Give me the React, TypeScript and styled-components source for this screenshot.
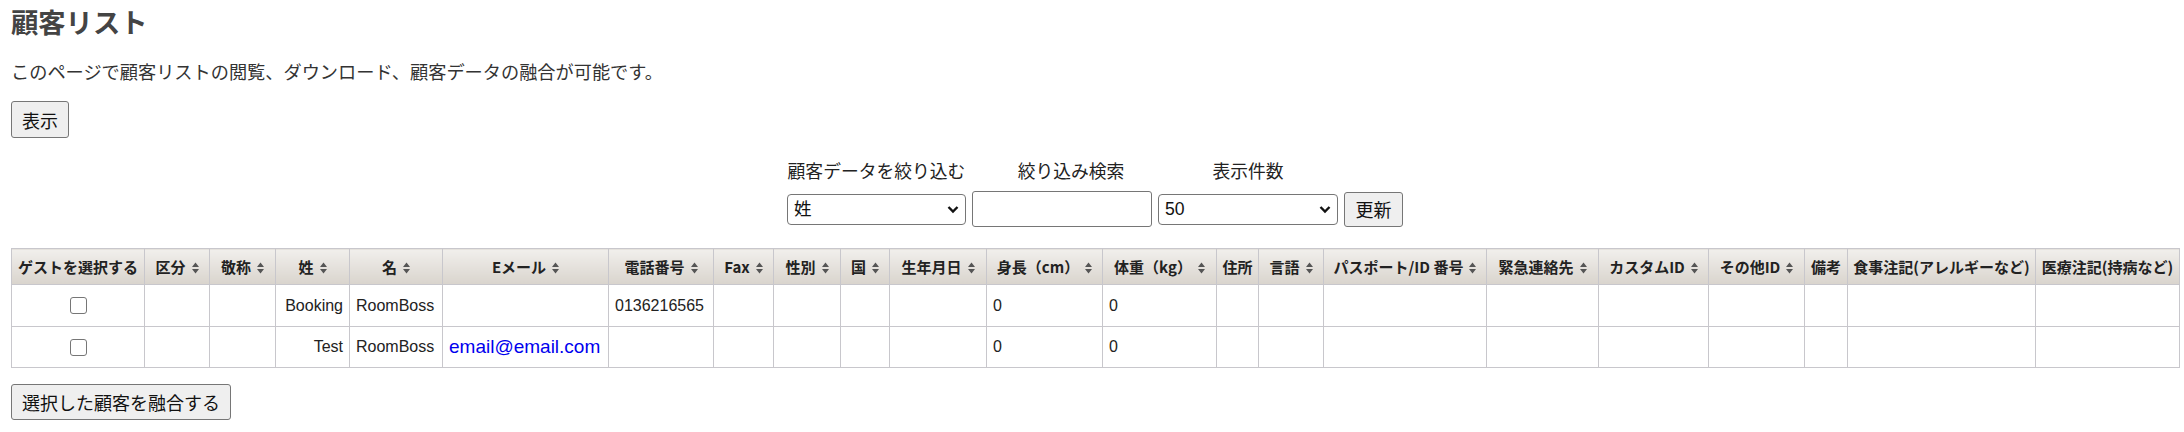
import styled, { createGlobalStyle } from "styled-components"

interface ColumnT {
  label: string,
  width: number,
  sort: boolean,
}

interface GuestT {
  id: number,
  lastName: string,
  firstName: string,
  email: string,
  phone: string,
  height: string,
  weight: string,
}

const GlobalStyle = createGlobalStyle`
  body {
    margin: 0;
    padding: 0 5px 0 11px;
    background: #fff;
    color: #222;
    font-family: "Liberation Sans", "Noto Sans CJK JP", sans-serif;
  }
`

const Title = styled.h2`
  margin: 6px 0 0;
  font-family: "Noto Sans CJK JP", sans-serif;
  font-size: 27.3px;
  line-height: 30px;
  font-weight: 700;
  color: #444;
`

const Lead = styled.p`
  margin: 23px 0 0;
  font-family: "Noto Sans CJK JP", sans-serif;
  font-size: 18.2px;
  line-height: 24px;
  color: #333;
`

const Button = styled.button<{ $height: number, $top: number }>`
  display: block;
  box-sizing: border-box;
  height: ${(p) => p.$height}px;
  margin-top: ${(p) => p.$top}px;
  padding: 0 10px;
  font-family: "Noto Sans CJK JP", sans-serif;
  font-size: 18px;
  line-height: 20px;
  color: #111;
  background: #efefef;
  border: 1px solid #767676;
  border-radius: 3px;
`

const FilterGrid = styled.div`
  display: grid;
  grid-template-columns: 179px 180px 180px 59px;
  column-gap: 6px;
  row-gap: 9px;
  justify-content: center;
  align-items: center;
  margin-top: 20px;
`

const FilterLabel = styled.div<{ $shift?: number }>`
  padding-left: ${(p) => p.$shift || 0}px;
  text-align: center;
  font-family: "Noto Sans CJK JP", sans-serif;
  font-size: 17.8px;
  line-height: 24px;
  color: #222;
  white-space: nowrap;
`

const SelectWrap = styled.div`
  position: relative;
  height: 31px;
`

const Select = styled.select`
  appearance: none;
  box-sizing: border-box;
  width: 100%;
  height: 31px;
  padding: 0 24px 0 6px;
  font-family: "Liberation Sans", "Noto Sans CJK JP", sans-serif;
  font-size: 17.6px;
  color: #111;
  background: #fff;
  border: 1px solid #767676;
  border-radius: 4px;
`

const Chevron = styled.svg`
  position: absolute;
  right: 7px;
  top: 11px;
  pointer-events: none;
`

const TextInput = styled.input`
  box-sizing: border-box;
  width: 100%;
  height: 36px;
  border: 1px solid #767676;
  border-radius: 3px;
  font-size: 17px;
`

const Table = styled.table`
  margin-top: 21px;
  width: 2168px;
  table-layout: fixed;
  border-collapse: collapse;
`

const HeadCell = styled.th`
  height: 36px;
  padding: 0 4px;
  box-sizing: border-box;
  font-family: "Noto Sans CJK JP", sans-serif;
  font-size: 15px;
  font-weight: 700;
  color: #222;
  text-align: center;
  white-space: nowrap;
  overflow: hidden;
  background: linear-gradient(#f1efec, #d9d4cd);
  border: 1px solid #c8c7cc;
`

const SortIcon = styled.svg`
  margin-left: 6px;
  vertical-align: -1px;
`

const Row = styled.tr<{ $height: number }>`
  height: ${(p) => p.$height}px;
`

const Cell = styled.td<{ $align?: string }>`
  padding: 0 6px;
  font-size: 16px;
  color: #222;
  text-align: ${(p) => p.$align || "left"};
  white-space: nowrap;
  border: 1px solid #c8c7cc;
`

const Check = styled.input`
  appearance: none;
  display: block;
  box-sizing: border-box;
  width: 17px;
  height: 17px;
  margin: 0 auto;
  background: #fff;
  border: 1px solid #767676;
  border-radius: 3px;
`

const MailLink = styled.a`
  font-size: 19px;
  color: #0000ee;
  text-decoration: none;
`

const columns: ColumnT[] = [
  { label: "ゲストを選択する", width: 133, sort: false },
  { label: "区分", width: 65, sort: true },
  { label: "敬称", width: 66, sort: true },
  { label: "姓", width: 74, sort: true },
  { label: "名", width: 93, sort: true },
  { label: "Eメール", width: 166, sort: true },
  { label: "電話番号", width: 105, sort: true },
  { label: "Fax", width: 60, sort: true },
  { label: "性別", width: 67, sort: true },
  { label: "国", width: 49, sort: true },
  { label: "生年月日", width: 97, sort: true },
  { label: "身長（cm）", width: 116, sort: true },
  { label: "体重（kg）", width: 114, sort: true },
  { label: "住所", width: 42, sort: false },
  { label: "言語", width: 65, sort: true },
  { label: "パスポート/ID 番号", width: 163, sort: true },
  { label: "緊急連絡先", width: 112, sort: true },
  { label: "カスタムID", width: 110, sort: true },
  { label: "その他ID", width: 96, sort: true },
  { label: "備考", width: 43, sort: false },
  { label: "食事注記(アレルギーなど)", width: 188, sort: false },
  { label: "医療注記(持病など)", width: 144, sort: false },
]

const guests: GuestT[] = [
  { id: 1, lastName: "Booking", firstName: "RoomBoss", email: "", phone: "0136216565", height: "0", weight: "0" },
  { id: 2, lastName: "Test", firstName: "RoomBoss", email: "email@email.com", phone: "", height: "0", weight: "0" },
]

function Sort() {
  return (
    <SortIcon width="7" height="12" viewBox="0 0 7 12">
      <path d="M3.5 0.5 L7 5 H0 Z M3.5 11.5 L0 7 H7 Z" fill="#555" />
    </SortIcon>
  )
}

function Down() {
  return (
    <Chevron width="12" height="9" viewBox="0 0 12 9">
      <polyline points="1.5,2 6,6.5 10.5,2" fill="none" stroke="#111" strokeWidth="2.4" />
    </Chevron>
  )
}

function App() {
  return (
    <main>
      <GlobalStyle />
      <Title>顧客リスト</Title>
      <Lead>このページで顧客リストの閲覧、ダウンロード、顧客データの融合が可能です。</Lead>
      <Button $height={37} $top={18}>表示</Button>

      <FilterGrid>
        <FilterLabel>顧客データを絞り込む</FilterLabel>
        <FilterLabel $shift={18}>絞り込み検索</FilterLabel>
        <FilterLabel>表示件数</FilterLabel>
        <div />
        <SelectWrap>
          <Select defaultValue="姓">
            <option>姓</option>
            <option>名</option>
            <option>Eメール</option>
          </Select>
          <Down />
        </SelectWrap>
        <TextInput type="text" />
        <SelectWrap>
          <Select defaultValue="50">
            <option>25</option>
            <option>50</option>
            <option>100</option>
          </Select>
          <Down />
        </SelectWrap>
        <Button $height={35} $top={0}>更新</Button>
      </FilterGrid>

      <Table>
        <colgroup>
          {columns.map((c) => (
            <col key={c.label} style={{ width: c.width }} />
          ))}
        </colgroup>
        <thead>
          <tr>
            {columns.map((c) => (
              <HeadCell key={c.label}>
                {c.label}
                {c.sort && <Sort />}
              </HeadCell>
            ))}
          </tr>
        </thead>
        <tbody>
          {guests.map((g, i) => (
            <Row key={g.id} $height={i === 0 ? 42 : 41}>
              <Cell><Check type="checkbox" /></Cell>
              <Cell />
              <Cell />
              <Cell $align="right">{g.lastName}</Cell>
              <Cell>{g.firstName}</Cell>
              <Cell>{g.email && <MailLink href="#">{g.email}</MailLink>}</Cell>
              <Cell>{g.phone}</Cell>
              <Cell />
              <Cell />
              <Cell />
              <Cell />
              <Cell>{g.height}</Cell>
              <Cell>{g.weight}</Cell>
              <Cell />
              <Cell />
              <Cell />
              <Cell />
              <Cell />
              <Cell />
              <Cell />
              <Cell />
              <Cell />
            </Row>
          ))}
        </tbody>
      </Table>

      <Button $height={36} $top={16}>選択した顧客を融合する</Button>
    </main>
  )
}

export default App
